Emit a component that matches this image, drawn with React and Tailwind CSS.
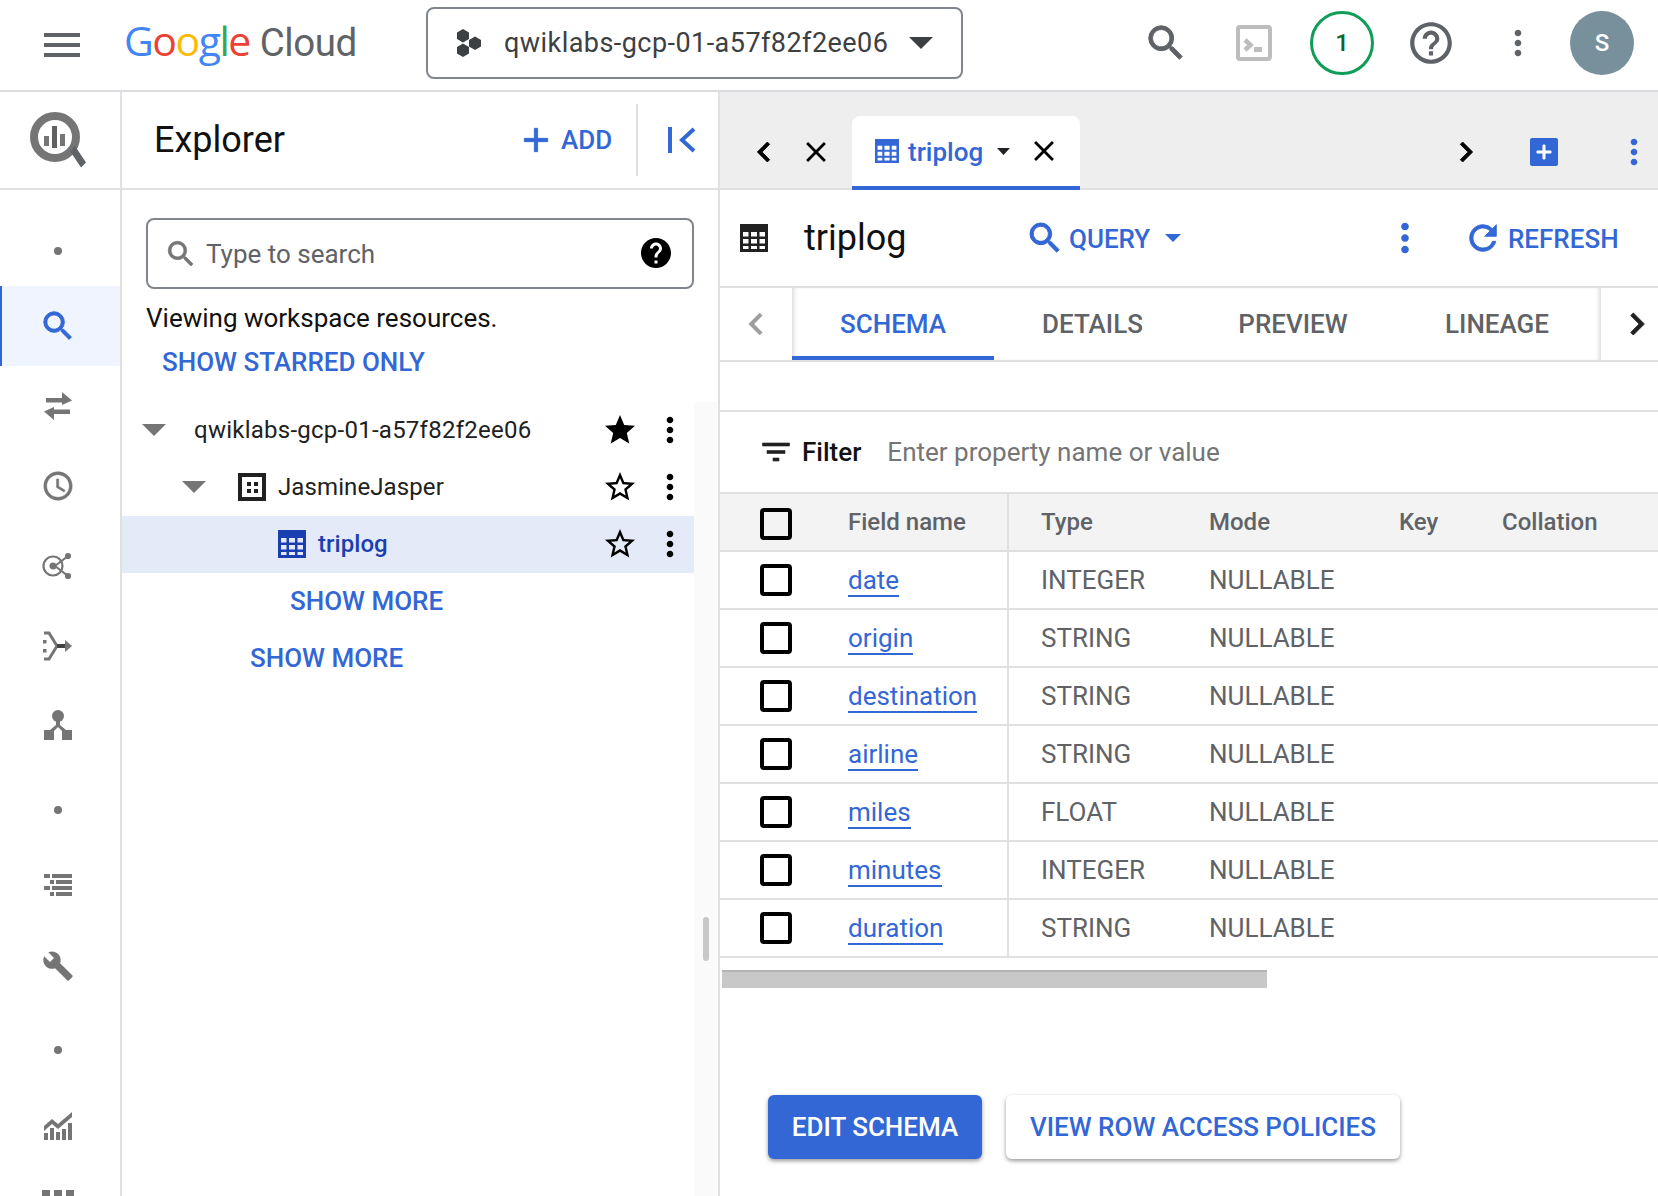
import React from "react";

const P = {
  search: "M15.5 14h-.79l-.28-.27A6.471 6.471 0 0 0 16 9.5 6.5 6.5 0 1 0 9.5 16c1.61 0 3.09-.59 4.23-1.57l.27.28v.79l5 4.99L20.49 19l-4.99-5zm-6 0C7.01 14 5 11.99 5 9.5S7.01 5 9.5 5 14 7.01 14 9.5 11.99 14 9.5 14z",
  star: "M12 17.27 18.18 21l-1.64-7.03L22 9.24l-7.19-.61L12 2 9.19 8.63 2 9.24l5.46 4.73L5.82 21z",
  starO: "M22 9.24l-7.19-.62L12 2 9.19 8.63 2 9.24l5.46 4.73L5.82 21 12 17.27 18.18 21l-1.63-7.03L22 9.24zM12 15.4l-3.76 2.27 1-4.28-3.32-2.88 4.38-.38L12 6.1l1.71 4.04 4.38.38-3.32 2.88 1 4.28L12 15.4z",
  refresh: "M17.65 6.35A7.958 7.958 0 0 0 12 4c-4.42 0-7.99 3.58-7.99 8s3.57 8 7.99 8c3.73 0 6.84-2.55 7.73-6h-2.08A5.99 5.99 0 0 1 12 18c-3.31 0-6-2.69-6-6s2.69-6 6-6c1.66 0 3.14.69 4.22 1.78L13 11h7V4l-2.35 2.35z",
  help: "M12 2C6.48 2 2 6.48 2 12s4.48 10 10 10 10-4.48 10-10S17.52 2 12 2zm1 17h-2v-2h2v2zm2.07-7.75l-.9.92C13.45 12.9 13 13.5 13 15h-2v-.5c0-1.1.45-2.1 1.17-2.83l1.24-1.26c.37-.36.59-.86.59-1.41 0-1.1-.9-2-2-2s-2 .9-2 2H8c0-2.21 1.79-4 4-4s4 1.79 4 4c0 .88-.36 1.68-.93 2.25z",
  helpO: "M11 18h2v-2h-2v2zm1-16C6.48 2 2 6.48 2 12s4.48 10 10 10 10-4.48 10-10S17.52 2 12 2zm0 18c-4.41 0-8-3.59-8-8s3.59-8 8-8 8 3.59 8 8-3.59 8-8 8zm0-14c-2.21 0-4 1.79-4 4h2c0-1.1.9-2 2-2s2 .9 2 2c0 2-3 1.75-3 5h2c0-2.25 3-2.5 3-5 0-2.21-1.79-4-4-4z",
  clock: "M11.99 2C6.47 2 2 6.48 2 12s4.47 10 9.99 10C17.52 22 22 17.52 22 12S17.52 2 11.99 2zM12 20c-4.42 0-8-3.58-8-8s3.58-8 8-8 8 3.58 8 8-3.58 8-8 8zm.5-13H11v6l5.25 3.15.75-1.23-4.5-2.67z",
  wrench: "M22.7 19l-9.1-9.1c.9-2.3.4-5-1.5-6.9-2-2-5-2.4-7.4-1.3L9 6 6 9 1.6 4.7C.4 7.1.9 10.1 2.9 12.1c1.9 1.9 4.6 2.4 6.9 1.5l9.1 9.1c.4.4 1 .4 1.4 0l2.3-2.3c.5-.4.5-1.1.1-1.4z",
  filter: "M10 18h4v-2h-4v2zM3 6v2h18V6H3zm3 7h12v-2H6v2z",
  add: "M19 13h-6v6h-2v-6H5v-2h6V5h2v6h6v2z",
  close: "M19 6.41 17.59 5 12 10.59 6.41 5 5 6.41 10.59 12 5 17.59 6.41 19 12 13.41 17.59 19 19 17.59 13.41 12z",
  left: "M15.41 7.41 14 6l-6 6 6 6 1.41-1.41L10.83 12z",
  right: "M10 6 8.59 7.41 13.17 12l-4.58 4.59L10 18l6-6z",
  more: "M12 8c1.1 0 2-.9 2-2s-.9-2-2-2-2 .9-2 2 .9 2 2 2zm0 2c-1.1 0-2 .9-2 2s.9 2 2 2 2-.9 2-2-.9-2-2-2zm0 6c-1.1 0-2 .9-2 2s.9 2 2 2 2-.9 2-2-.9-2-2-2z",
};

function I({ d, className, bold = 0 }) {
  return (
    <svg viewBox="0 0 24 24" className={`shrink-0 ${className}`} fill="currentColor" fillRule="evenodd" stroke={bold ? "currentColor" : "none"} strokeWidth={bold}>
      <path d={d} />
    </svg>
  );
}

function Caret({ className }) {
  return (
    <svg viewBox="0 0 24 12" preserveAspectRatio="none" className={`shrink-0 ${className}`} fill="currentColor">
      <path d="M0 0h24L12 12z" />
    </svg>
  );
}

function BqLogo() {
  return (
    <svg viewBox="0 0 56 56" className="w-[56px] h-[56px]">
      <circle cx="25" cy="25" r="21" fill="none" stroke="#757575" strokeWidth="8" />
      <rect x="14" y="24" width="5" height="10" fill="#757575" />
      <rect x="22" y="14" width="5" height="22" fill="#616161" />
      <rect x="30" y="22" width="5" height="12" fill="#757575" />
      <path d="M40 39l5-5 11 16.5-5 5z" fill="#5f6368" />
    </svg>
  );
}

function Dot() {
  return <div className="w-[8px] h-[8px] rounded-full bg-[#757575]" />;
}

function Side({ h, active, children }) {
  return (
    <div className={`flex items-center justify-center shrink-0 ${h} ${active ? "bg-[#f0f4fe] border-l-2 border-[#3367d6] pr-[6px]" : "pr-[4px]"}`}>
      {children}
    </div>
  );
}

function Swap() {
  return (
    <svg viewBox="0 0 28 28" className="w-[28px] h-[28px]" fill="#757575">
      <path d="M2 6h16V0l10 8.5L18 13V10.5H2z" />
      <path d="M26 22H10v6L0 19.5 10 15v2.5h16z" />
    </svg>
  );
}

function Analysis() {
  return (
    <svg viewBox="0 0 30 30" className="w-[30px] h-[30px] ml-[-2px]" fill="none" stroke="#757575" strokeWidth="2.2">
      <circle cx="11" cy="15" r="9.5" />
      <circle cx="11" cy="15" r="2.5" fill="#757575" />
      <path d="M13 15l13-10M13 15l13 10" />
      <circle cx="26" cy="5" r="2" fill="#757575" />
      <circle cx="26" cy="25" r="2" fill="#757575" />
    </svg>
  );
}

function Pipeline() {
  return (
    <svg viewBox="0 0 30 30" className="w-[30px] h-[30px]" fill="none" stroke="#757575" strokeWidth="3">
      <path d="M1 2h5l8 13-8 13H1" />
      <path d="M14 15h12" stroke="#424242" strokeWidth="4" />
      <path d="M22 9l7 6-7 6z" fill="#757575" stroke="none" />
      <rect x="0" y="9" width="3.5" height="3.5" fill="#757575" stroke="none" />
      <rect x="0" y="18" width="3.5" height="3.5" fill="#757575" stroke="none" />
    </svg>
  );
}

function Hub() {
  return (
    <svg viewBox="0 0 28 30" className="w-[28px] h-[30px] mt-[-2px]" fill="#757575">
      <circle cx="14" cy="6" r="6" />
      <path d="M12 11h4v4l6 5h6v10H18V21l-4-4-4 4v9H0V20h6l6-5z" />
    </svg>
  );
}

function ListIcon() {
  return (
    <svg viewBox="0 0 28 22" className="w-[28px] h-[22px]" fill="#757575">
      <rect x="0" y="0" width="6" height="4" />
      <rect x="8" y="0" width="20" height="4" />
      <rect x="6" y="6" width="4" height="4" />
      <rect x="12" y="6" width="16" height="4" />
      <rect x="0" y="12" width="6" height="4" />
      <rect x="8" y="12" width="20" height="4" />
      <rect x="6" y="18" width="4" height="4" />
      <rect x="12" y="18" width="16" height="4" />
    </svg>
  );
}

function ChartIcon() {
  return (
    <svg viewBox="0 0 28 28" className="w-[28px] h-[28px] mt-[-2px]" fill="#757575">
      <path d="M0 14l8-7 6 5L28 0v5L14 17 8 12l-8 7z" />
      <rect x="0" y="21" width="4" height="7" />
      <rect x="6" y="16" width="4" height="12" />
      <rect x="12" y="20" width="4" height="8" />
      <rect x="18" y="17" width="4" height="11" />
      <rect x="24" y="11" width="4" height="17" />
    </svg>
  );
}

function HexIcon() {
  return (
    <svg viewBox="0 0 28 28" className="w-[28px] h-[28px] shrink-0" fill="#3c4043">
      <path d="M8 0l6 3.5v6.5l-6 3.5L2 10V3.5z" />
      <path d="M8 14.5l6 3.5v6.5L8 28l-6-3.5V18z" />
      <path d="M20 7.5l6 3.5v6.5L20 21l-6-3.5V11z" />
    </svg>
  );
}

function Terminal() {
  return (
    <svg viewBox="0 0 36 36" className="w-[36px] h-[36px]" fill="none">
      <rect x="2" y="2" width="32" height="32" rx="2" stroke="#bdbdbd" strokeWidth="4" />
      <path d="M9 15l5.5 5-5.5 5" stroke="#bdbdbd" strokeWidth="4.5" />
      <rect x="18" y="22" width="8" height="5" fill="#bdbdbd" />
    </svg>
  );
}

function Dataset() {
  return (
    <svg viewBox="0 0 28 28" className="w-[28px] h-[28px] shrink-0" fill="#212121">
      <path fillRule="evenodd" d="M0 0h28v28H0zM4 4v20h20V4z" />
      <rect x="9" y="9" width="4" height="4" />
      <rect x="16" y="9" width="4" height="4" />
      <rect x="9" y="16" width="4" height="4" />
      <rect x="16" y="16" width="4" height="4" />
    </svg>
  );
}

function TableGlyph({ className, fill }) {
  return (
    <svg viewBox="0 0 28 28" className={`shrink-0 ${className}`} fill={fill} fillRule="evenodd">
      <path d="M0 0h28v28H0zM3 8v4.5h5.5V8zm8 0v4.5h6V8zm8.5 0v4.5H25V8zM3 15v4.5h5.5V15zm8 0v4.5h6V15zm8.5 0v4.5H25V15zM3 22v3h5.5v-3zm8 0v3h6v-3zm8.5 0v3H25v-3z" />
    </svg>
  );
}

function TreeRow({ children, active, star }) {
  return (
    <div className={`flex items-center h-[57px] ${active ? "bg-[#e4eaf8]" : ""}`}>
      <div className="flex items-center flex-1 min-w-0 pb-[2px]">{children}</div>
      <I d={star ? P.star : P.starO} className="w-[36px] h-[36px] text-black mr-[12px] mt-[-2px]" />
      <I d={P.more} className="w-[40px] h-[40px] text-black mr-[4px] mt-[-2px]" />
    </div>
  );
}

const fields = [
  ["date", "INTEGER"],
  ["origin", "STRING"],
  ["destination", "STRING"],
  ["airline", "STRING"],
  ["miles", "FLOAT"],
  ["minutes", "INTEGER"],
  ["duration", "STRING"],
];

function Check({ extra = "" }) {
  return <div className={`w-[32px] h-[32px] border-[4px] border-black rounded-[4px] shrink-0 ${extra}`} />;
}

function Google() {
  return (
    <div className="flex items-baseline font-['Open_Sans'] text-[41px] tracking-[-1.5px] ml-[44px] w-[305px] mt-[-8px]">
      <span className="text-[#4285f4]">G</span>
      <span className="text-[#ea4335]">o</span>
      <span className="text-[#fbbc05]">o</span>
      <span className="text-[#4285f4]">g</span>
      <span className="text-[#34a853]">l</span>
      <span className="text-[#ea4335]">e</span>
      <span className="text-[#5f6368] ml-[10px] font-['Roboto'] text-[38.5px] tracking-[-0.5px]">Cloud</span>
    </div>
  );
}

export default function App() {
  return (
    <div className="w-[1658px] h-[1196px] overflow-hidden bg-white font-['Roboto',sans-serif] flex flex-col text-[26px]">
      {/* Top bar */}
      <header className="h-[92px] shrink-0 border-b-2 border-[#dadce0] flex items-center">
        <svg viewBox="0 0 36 24" className="w-[36px] h-[24px] ml-[44px] shrink-0" fill="#5f6368">
          <rect width="36" height="4" />
          <rect y="10" width="36" height="4" />
          <rect y="20" width="36" height="4" />
        </svg>
        <Google />
        <div className="ml-[-3px] w-[537px] h-[72px] border-2 border-[#80868b] rounded-[8px] flex items-center pl-[27px] mt-[-4px] shrink-0">
          <HexIcon />
          <span className="ml-[21px] text-[#3c4043] tracking-[0.45px] text-[27px]">qwiklabs-gcp-01-a57f82f2ee06</span>
          <Caret className="w-[24px] h-[12px] text-[#3c4043] ml-[21px]" />
        </div>
        <I d={P.search} bold={0.5} className="w-[46px] h-[46px] text-[#5f6368] ml-[180px] mt-[-4px]" />
        <div className="ml-[47px] mt-[-4px]"><Terminal /></div>
        <div className="ml-[38px] mt-[-4px] w-[64px] h-[64px] rounded-full border-[3px] border-[#0f9d58] flex items-center justify-center text-[#0d652d] text-[24px] font-medium shrink-0">1</div>
        <I d={P.helpO} className="w-[50px] h-[50px] text-[#5f6368] ml-[32px] mt-[-4px]" />
        <I d={P.more} className="w-[40px] h-[40px] text-[#5f6368] ml-[42px] mt-[-4px]" />
        <div className="ml-[32px] mt-[-4px] w-[64px] h-[64px] rounded-full bg-[#78909c] flex items-center justify-center text-white text-[24px] font-medium shrink-0">S</div>
      </header>

      <div className="flex flex-1 min-h-0">
        {/* Sidebar */}
        <aside className="w-[122px] shrink-0 border-r-2 border-[#e0e0e0] flex flex-col">
          <div className="h-[98px] shrink-0 border-b-2 border-[#e0e0e0] flex items-center pl-[30px]">
            <BqLogo />
          </div>
          <Side h="h-[96px] pt-[25px]"><Dot /></Side>
          <Side h="h-[80px]" active><I d={P.search} bold={0.6} className="w-[38px] h-[38px] text-[#3367d6]" /></Side>
          <Side h="h-[80px]"><Swap /></Side>
          <Side h="h-[80px]"><I d={P.clock} bold={0.4} className="w-[34px] h-[34px] text-[#757575]" /></Side>
          <Side h="h-[80px]"><Analysis /></Side>
          <Side h="h-[80px]"><Pipeline /></Side>
          <Side h="h-[80px]"><Hub /></Side>
          <Side h="h-[88px]"><Dot /></Side>
          <Side h="h-[62px]"><ListIcon /></Side>
          <Side h="h-[100px]"><I d={P.wrench} className="w-[32px] h-[32px] text-[#757575]" /></Side>
          <Side h="h-[68px]"><Dot /></Side>
          <Side h="h-[86px]"><ChartIcon /></Side>
          <div className="flex justify-center gap-[4px] mt-[20px] pr-[4px]">
            <div className="w-[8px] h-[6px] bg-[#757575]" />
            <div className="w-[8px] h-[6px] bg-[#757575]" />
            <div className="w-[8px] h-[6px] bg-[#757575]" />
          </div>
        </aside>

        {/* Explorer */}
        <section className="w-[598px] shrink-0 border-r-2 border-[#e0e0e0] flex flex-col">
          <div className="h-[98px] shrink-0 border-b-2 border-[#e0e0e0] flex items-center">
            <span className="ml-[32px] text-[36px] text-[#111] w-[362px]">Explorer</span>
            <I d={P.add} bold={0.5} className="w-[40px] h-[40px] text-[#3367d6]" />
            <span className="ml-[5px] text-[#3367d6] font-medium">ADD</span>
            <div className="w-[2px] h-[72px] bg-[#e0e0e0] ml-[24px]" />
            <svg viewBox="0 0 28 26" className="w-[28px] h-[26px] ml-[30px] text-[#3367d6]" fill="none" stroke="currentColor" strokeWidth="4">
              <path d="M2 0v26M26 2L14 13l12 11" />
            </svg>
          </div>
          <div className="h-[212px] shrink-0 pl-[24px] pt-[28px]">
            <div className="w-[548px] h-[71px] border-2 border-[#80868b] rounded-[8px] flex items-center pl-[16px]">
              <I d={P.search} bold={0.5} className="w-[34px] h-[34px] text-[#757575]" />
              <span className="ml-[8px] text-[#5f6368] flex-1 pt-[2px]">Type to search</span>
              <I d={P.help} className="w-[36px] h-[36px] text-black mr-[18px] mt-[-2px]" />
            </div>
            <div className="mt-[11px] text-[#111] h-[36px] leading-[36px]">Viewing workspace resources.</div>
            <div className="mt-[8px] ml-[16px] text-[#3367d6] font-medium h-[36px] leading-[36px]">SHOW STARRED ONLY</div>
          </div>
          <div className="flex flex-1 min-h-0">
            <div className="w-[572px] shrink-0">
              <TreeRow star>
                <Caret className="w-[24px] h-[12px] text-[#757575] ml-[20px]" />
                <span className="ml-[28px] text-[#212121] text-[24px] tracking-[0.25px]">qwiklabs-gcp-01-a57f82f2ee06</span>
              </TreeRow>
              <TreeRow>
                <Caret className="w-[24px] h-[12px] text-[#757575] ml-[60px]" />
                <div className="ml-[32px]"><Dataset /></div>
                <span className="ml-[12px] text-[#212121] text-[24px] tracking-[0.1px]">JasmineJasper</span>
              </TreeRow>
              <TreeRow active>
                <TableGlyph className="w-[28px] h-[28px] ml-[156px]" fill="#1a3fb0" />
                <span className="ml-[12px] text-[#1a3fb0] text-[24px] font-medium tracking-[0.05px]">triplog</span>
              </TreeRow>
              <div className="h-[57px] flex items-center pl-[168px] text-[#3367d6] font-medium">SHOW MORE</div>
              <div className="h-[57px] flex items-center pl-[128px] text-[#3367d6] font-medium">SHOW MORE</div>
            </div>
            <div className="flex-1 bg-[#fafafa] pt-[515px] flex justify-center">
              <div className="w-[6px] h-[44px] rounded-[3px] bg-[#c8c8c8]" />
            </div>
          </div>
        </section>

        {/* Right panel */}
        <main className="flex-1 min-w-0 flex flex-col">
          <div className="h-[98px] shrink-0 bg-[#eeeeee] border-b-2 border-[#e0e0e0] flex items-end">
            <div className="h-[74px] flex items-center flex-1 -mb-[2px]">
              <I d={P.left} bold={0.5} className="w-[40px] h-[40px] text-black ml-[24px] mt-[-2px]" />
              <I d={P.close} className="w-[34px] h-[34px] text-black ml-[15px] mt-[-2px]" />
              <div className="ml-[19px] w-[228px] h-[74px] bg-white rounded-t-[8px] border-b-[4px] border-[#3367d6] flex items-center">
                <TableGlyph className="w-[24px] h-[24px] ml-[23px]" fill="#3367d6" />
                <span className="ml-[9px] text-[#3367d6] font-medium w-[80px] pt-[2px]">triplog</span>
                <Caret className="w-[13px] h-[7px] text-[#202124] ml-[9px]" />
                <I d={P.close} className="w-[34px] h-[34px] text-black ml-[17px]" />
              </div>
              <I d={P.right} bold={0.5} className="w-[40px] h-[40px] text-black ml-[366px] mt-[-2px]" />
              <div className="ml-[44px] mt-[-2px] w-[28px] h-[28px] rounded-[2px] bg-[#3367d6] flex items-center justify-center">
                <I d={P.add} bold={1} className="w-[24px] h-[24px] text-white" />
              </div>
              <I d={P.more} className="w-[40px] h-[40px] text-[#3367d6] ml-[56px] mt-[-2px]" />
            </div>
          </div>

          <div className="h-[98px] shrink-0 border-b-2 border-[#e0e0e0] flex items-center">
            <TableGlyph className="w-[28px] h-[28px] ml-[20px]" fill="#212121" />
            <span className="ml-[36px] text-[36px] text-[#111] w-[165px]">triplog</span>
            <I d={P.search} bold={0.6} className="w-[40px] h-[40px] text-[#3367d6] ml-[56px]" />
            <span className="ml-[4px] text-[#3367d6] font-medium text-[26px] w-[87px] pt-[2px]">QUERY</span>
            <Caret className="w-[16px] h-[8px] text-[#3367d6] ml-[9px]" />
            <I d={P.more} className="w-[46px] h-[46px] text-[#3367d6] ml-[201px]" />
            <I d={P.refresh} bold={0.5} className="w-[40px] h-[40px] text-[#3367d6] ml-[35px]" />
            <span className="ml-[5px] text-[#3367d6] font-medium text-[26px] pt-[2px]">REFRESH</span>
          </div>

          <div className="h-[74px] shrink-0 border-b-2 border-[#e0e0e0] flex items-stretch">
            <div className="w-[72px] shrink-0 flex items-center justify-center">
              <I d={P.left} bold={0.3} className="w-[44px] h-[44px] text-[#9e9e9e]" />
            </div>
            <div className="w-[809px] shrink-0 flex shadow-[inset_5px_0_4px_-3px_rgba(0,0,0,0.15),inset_-5px_0_4px_-3px_rgba(0,0,0,0.15)] text-[26px] font-medium text-[#5f6368]">
              <div className="w-[202px] pt-[4px] border-b-[4px] border-[#3367d6] text-[#3367d6] flex items-center justify-center">SCHEMA</div>
              <div className="w-[197px] flex items-center justify-center">DETAILS</div>
              <div className="w-[204px] flex items-center justify-center">PREVIEW</div>
              <div className="w-[204px] flex items-center justify-center">LINEAGE</div>
            </div>
            <div className="flex-1 flex items-center pl-[14px]">
              <I d={P.right} bold={0.5} className="w-[44px] h-[44px] text-[#212121]" />
            </div>
          </div>

          <div className="h-[50px] shrink-0 border-b-2 border-[#e0e0e0]" />

          <div className="h-[82px] shrink-0 flex items-center border-b-2 border-[#e0e0e0]">
            <I d={P.filter} bold={0.4} className="w-[36px] h-[36px] text-[#212121] ml-[38px]" />
            <span className="ml-[8px] text-[#111] font-medium">Filter</span>
            <span className="ml-[26px] text-[#757575]">Enter property name or value</span>
          </div>

          <div className="h-[58px] shrink-0 flex bg-[#f3f3f3] border-b-2 border-[#e0e0e0] text-[#5f6368] text-[24px] font-medium">
            <div className="w-[289px] shrink-0 border-r-2 border-[#e0e0e0] flex items-center pl-[40px]">
              <Check extra="mt-[3px]" />
              <span className="ml-[56px]">Field name</span>
            </div>
            <div className="w-[200px] shrink-0 flex items-center pl-[32px]">Type</div>
            <div className="w-[190px] shrink-0 flex items-center">Mode</div>
            <div className="w-[103px] shrink-0 flex items-center">Key</div>
            <div className="flex items-center">Collation</div>
          </div>
          {fields.map(([n, t]) => (
            <div key={n} className="h-[58px] shrink-0 flex border-b-2 border-[#e0e0e0] text-[#5f6368] text-[26px]">
              <div className="w-[289px] shrink-0 border-r-2 border-[#e0e0e0] flex items-center pl-[40px]">
                <Check />
                <span className="ml-[56px] text-[#3367d6] border-b-2 border-[#3367d6] leading-[30px] mt-[2px]">{n}</span>
              </div>
              <div className="w-[200px] shrink-0 flex items-center pl-[32px]">{t}</div>
              <div className="flex items-center">NULLABLE</div>
            </div>
          ))}

          <div className="shrink-0 mt-[12px] ml-[2px] w-[545px] h-[18px] bg-[#c8c8c8] border-t-2 border-[#b4b4b4]" />

          <div className="flex mt-[107px] ml-[48px] gap-[24px]">
            <div className="w-[214px] h-[64px] rounded-[6px] bg-[#3367d6] text-white font-medium flex items-center justify-center shadow-[0_2px_4px_rgba(0,0,0,0.4)]">EDIT SCHEMA</div>
            <div className="w-[394px] h-[64px] rounded-[6px] bg-white text-[#3367d6] font-medium flex items-center justify-center shadow-[0_2px_4px_rgba(0,0,0,0.4)]">VIEW ROW ACCESS POLICIES</div>
          </div>
        </main>
      </div>
    </div>
  );
}
